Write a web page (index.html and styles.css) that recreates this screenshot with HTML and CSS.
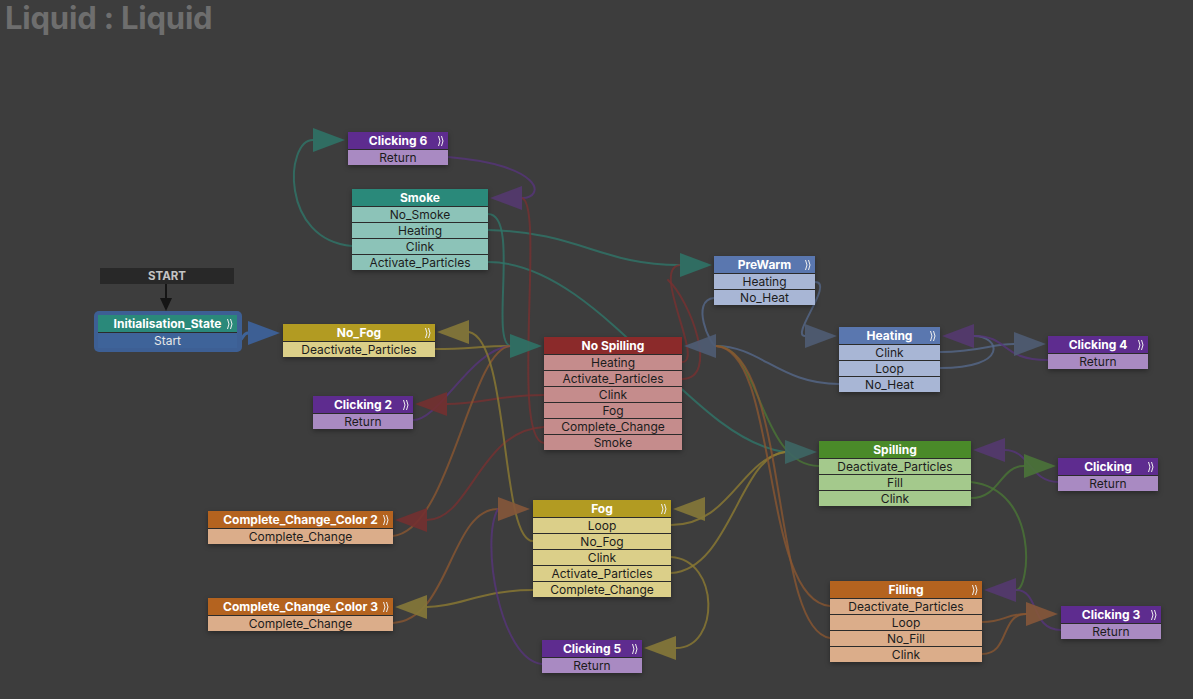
FILE: index.html
```html
<!DOCTYPE html>
<html>
<head>
<meta charset="utf-8">
<link rel="stylesheet" href="styles.css">
</head>
<body>
<div class="canvas">
  <div class="title">Liquid : Liquid</div>

  <svg class="edges" width="1193" height="699" viewBox="0 0 1193 699">
    <g fill="none" stroke-width="2" stroke-linecap="round">
      <path class="e-teal" d="M352,246 C280,240 285,140 313,140"/>
      <path class="e-purple" d="M448,157 C545,165 545,198 522,198"/>
      <path class="e-teal" d="M488,230 C580,232 600,265 680,265"/>
      <path class="e-teal" d="M488,214 C520,214 490,340 510,346"/>
      <path class="e-teal" d="M488,262 C600,262 690,440 785,452"/>
      <path class="e-yellow" d="M435,349 C470,349 480,346 510,346"/>
      <path class="e-purple" d="M413,420 C440,420 470,350 510,346"/>
      <path class="e-red" d="M544,443 C510,440 545,205 522,198"/>
      <path class="e-red" d="M544,395 C500,395 480,404 447,404"/>
      <path class="e-red" d="M544,427 C480,430 470,520 427,520"/>
      <path class="e-red" d="M682,362 C705,362 650,268 680,265"/>
      <path class="e-red" d="M682,379 C720,379 690,300 668,280"/>
      <path class="e-orange" d="M393,536 C450,530 470,350 510,346"/>
      <path class="e-orange" d="M393,623 C450,620 450,509 498,509"/>
      <path class="e-yellow" d="M533,590 C480,590 460,607 427,607"/>
      <path class="e-yellow" d="M533,541 C500,541 510,340 469,332"/>
      <path class="e-yellow" d="M671,525 C730,525 740,460 785,452"/>
      <path class="e-yellow" d="M671,557 C720,560 720,648 676,648"/>
      <path class="e-yellow" d="M671,573 C730,570 740,455 785,452"/>
      <path class="e-purple" d="M542,664 C500,660 480,540 498,509"/>
      <path class="e-slate" d="M714,298 C690,300 710,346 716,346"/>
      <path class="e-slate" d="M839,384 C780,384 760,346 716,346"/>
      <path class="e-slate" d="M815,282 C835,282 790,336 805,336"/>
      <path class="e-slate" d="M940,352 C980,352 990,344 1014,344"/>
      <path class="e-slate" d="M940,368 C1010,368 1000,336 974,336"/>
      <path class="e-purple" d="M1048,360 C1000,360 1010,336 974,336"/>
      <path class="e-green" d="M819,466 C760,466 760,346 716,346"/>
      <path class="e-green" d="M971,482 C1040,490 1030,590 1016,590"/>
      <path class="e-green" d="M971,498 C1000,498 1000,466 1024,466"/>
      <path class="e-purple" d="M1058,482 C1030,482 1030,450 1005,450"/>
      <path class="e-orange" d="M982,622 C1005,622 1005,614 1026,614"/>
      <path class="e-orange" d="M982,654 C1010,654 1000,614 1026,614"/>
      <path class="e-purple" d="M1061,630 C1030,630 1040,590 1016,590"/>
      <path class="e-orange" d="M830,606 C760,600 780,350 716,346"/>
      <path class="e-orange" d="M830,638 C770,630 790,350 716,346"/>
      <path class="e-blue" d="M237,341 C244,341 242,333 248,333"/>
      <path class="e-black" d="M166,284 L166,300"/>
    </g>
    <g class="arrows">
      <polygon class="a-black" points="160,298 172,298 166,311"/>
      <polygon class="a-teal" points="313,128 345,140 313,152"/>
      <polygon class="a-purple" points="522,186 490,198 522,210"/>
      <polygon class="a-teal" points="680,253 712,265 680,277"/>
      <polygon class="a-blue" points="248,321 280,333 248,345"/>
      <polygon class="a-yellow" points="469,320 437,332 469,344"/>
      <polygon class="a-teal" points="510,334 542,346 510,358"/>
      <polygon class="a-slate" points="716,334 684,346 716,358"/>
      <polygon class="a-slate" points="805,324 837,336 805,348"/>
      <polygon class="a-purple" points="974,324 942,336 974,348"/>
      <polygon class="a-slate" points="1014,332 1046,344 1014,356"/>
      <polygon class="a-red" points="447,392 415,404 447,416"/>
      <polygon class="a-tealgray" points="785,440 817,452 785,464"/>
      <polygon class="a-purple" points="1005,438 973,450 1005,462"/>
      <polygon class="a-green" points="1024,454 1056,466 1024,478"/>
      <polygon class="a-red" points="427,508 395,520 427,532"/>
      <polygon class="a-orange" points="498,497 530,509 498,521"/>
      <polygon class="a-yellow" points="705,497 673,509 705,521"/>
      <polygon class="a-yellow" points="427,595 395,607 427,619"/>
      <polygon class="a-yellow" points="676,636 644,648 676,660"/>
      <polygon class="a-purple" points="1016,578 984,590 1016,602"/>
      <polygon class="a-orange" points="1026,602 1058,614 1026,626"/>
    </g>
  </svg>

  <div class="start-tag">START</div>

  <div class="selected n-init">
    <div class="node">
      <div class="hdr h-teal">Initialisation_State<svg class="seq" viewBox="0 0 8 12"><path d="M1.5,1 Q4.5,6 1.5,11 M4.5,1 Q7.5,6 4.5,11"/></svg></div>
      <div class="row r-blue">Start</div>
    </div>
  </div>

  <div class="node n-click6">
    <div class="hdr h-purple">Clicking 6<svg class="seq" viewBox="0 0 8 12"><path d="M1.5,1 Q4.5,6 1.5,11 M4.5,1 Q7.5,6 4.5,11"/></svg></div>
    <div class="row r-purple">Return</div>
  </div>

  <div class="node n-smoke">
    <div class="hdr h-teal">Smoke</div>
    <div class="row r-teal">No_Smoke</div>
    <div class="row r-teal">Heating</div>
    <div class="row r-teal">Clink</div>
    <div class="row r-teal">Activate_Particles</div>
  </div>

  <div class="node n-prewarm">
    <div class="hdr h-slate">PreWarm<svg class="seq" viewBox="0 0 8 12"><path d="M1.5,1 Q4.5,6 1.5,11 M4.5,1 Q7.5,6 4.5,11"/></svg></div>
    <div class="row r-slate">Heating</div>
    <div class="row r-slate">No_Heat</div>
  </div>

  <div class="node n-heating">
    <div class="hdr h-slate">Heating<svg class="seq" viewBox="0 0 8 12"><path d="M1.5,1 Q4.5,6 1.5,11 M4.5,1 Q7.5,6 4.5,11"/></svg></div>
    <div class="row r-slate">Clink</div>
    <div class="row r-slate">Loop</div>
    <div class="row r-slate">No_Heat</div>
  </div>

  <div class="node n-click4">
    <div class="hdr h-purple">Clicking 4<svg class="seq" viewBox="0 0 8 12"><path d="M1.5,1 Q4.5,6 1.5,11 M4.5,1 Q7.5,6 4.5,11"/></svg></div>
    <div class="row r-purple">Return</div>
  </div>

  <div class="node n-nofog">
    <div class="hdr h-yellow">No_Fog<svg class="seq" viewBox="0 0 8 12"><path d="M1.5,1 Q4.5,6 1.5,11 M4.5,1 Q7.5,6 4.5,11"/></svg></div>
    <div class="row r-yellow">Deactivate_Particles</div>
  </div>

  <div class="node n-nospill">
    <div class="hdr h-red">No Spilling</div>
    <div class="row r-red">Heating</div>
    <div class="row r-red">Activate_Particles</div>
    <div class="row r-red">Clink</div>
    <div class="row r-red">Fog</div>
    <div class="row r-red">Complete_Change</div>
    <div class="row r-red">Smoke</div>
  </div>

  <div class="node n-click2">
    <div class="hdr h-purple">Clicking 2<svg class="seq" viewBox="0 0 8 12"><path d="M1.5,1 Q4.5,6 1.5,11 M4.5,1 Q7.5,6 4.5,11"/></svg></div>
    <div class="row r-purple">Return</div>
  </div>

  <div class="node n-spill">
    <div class="hdr h-green">Spilling</div>
    <div class="row r-green">Deactivate_Particles</div>
    <div class="row r-green">Fill</div>
    <div class="row r-green">Clink</div>
  </div>

  <div class="node n-click">
    <div class="hdr h-purple">Clicking<svg class="seq" viewBox="0 0 8 12"><path d="M1.5,1 Q4.5,6 1.5,11 M4.5,1 Q7.5,6 4.5,11"/></svg></div>
    <div class="row r-purple">Return</div>
  </div>

  <div class="node n-ccc2">
    <div class="hdr h-orange">Complete_Change_Color 2<svg class="seq" viewBox="0 0 8 12"><path d="M1.5,1 Q4.5,6 1.5,11 M4.5,1 Q7.5,6 4.5,11"/></svg></div>
    <div class="row r-orange">Complete_Change</div>
  </div>

  <div class="node n-ccc3">
    <div class="hdr h-orange">Complete_Change_Color 3<svg class="seq" viewBox="0 0 8 12"><path d="M1.5,1 Q4.5,6 1.5,11 M4.5,1 Q7.5,6 4.5,11"/></svg></div>
    <div class="row r-orange">Complete_Change</div>
  </div>

  <div class="node n-fog">
    <div class="hdr h-yellow">Fog<svg class="seq" viewBox="0 0 8 12"><path d="M1.5,1 Q4.5,6 1.5,11 M4.5,1 Q7.5,6 4.5,11"/></svg></div>
    <div class="row r-yellow">Loop</div>
    <div class="row r-yellow">No_Fog</div>
    <div class="row r-yellow">Clink</div>
    <div class="row r-yellow">Activate_Particles</div>
    <div class="row r-yellow">Complete_Change</div>
  </div>

  <div class="node n-click5">
    <div class="hdr h-purple">Clicking 5<svg class="seq" viewBox="0 0 8 12"><path d="M1.5,1 Q4.5,6 1.5,11 M4.5,1 Q7.5,6 4.5,11"/></svg></div>
    <div class="row r-purple">Return</div>
  </div>

  <div class="node n-filling">
    <div class="hdr h-orange">Filling<svg class="seq" viewBox="0 0 8 12"><path d="M1.5,1 Q4.5,6 1.5,11 M4.5,1 Q7.5,6 4.5,11"/></svg></div>
    <div class="row r-orange">Deactivate_Particles</div>
    <div class="row r-orange">Loop</div>
    <div class="row r-orange">No_Fill</div>
    <div class="row r-orange">Clink</div>
  </div>

  <div class="node n-click3">
    <div class="hdr h-purple">Clicking 3<svg class="seq" viewBox="0 0 8 12"><path d="M1.5,1 Q4.5,6 1.5,11 M4.5,1 Q7.5,6 4.5,11"/></svg></div>
    <div class="row r-purple">Return</div>
  </div>
</div>
</body>
</html>
```
FILE: styles.css
```css
html, body {
  margin: 0;
  padding: 0;
  background: #3d3d3d;
  width: 1193px;
  height: 699px;
  overflow: hidden;
  font-family: Inter, "Noto Sans", "Liberation Sans", sans-serif;
}

.canvas {
  position: relative;
  width: 1193px;
  height: 699px;
}

.title {
  padding: 0 0 0 5px;
  font-size: 31px;
  font-weight: 700;
  line-height: 36px;
  color: #6e6e6e;
  letter-spacing: -0.2px;
}

.edges {
  position: absolute;
  left: 0;
  top: 0;
}

.e-teal { stroke: #2f7569; opacity: 0.8; }
.e-purple { stroke: #56347a; opacity: 0.8; }
.e-yellow { stroke: #8c7b32; opacity: 0.8; }
.e-red { stroke: #773131; opacity: 0.8; }
.e-orange { stroke: #8a5631; opacity: 0.8; }
.e-slate { stroke: #55688a; opacity: 0.8; }
.e-green { stroke: #4a7536; opacity: 0.8; }
.e-blue { stroke: #3e6399; stroke-width: 3; }
.e-black { stroke: #151515; stroke-width: 2; }

.a-black { fill: #151515; }
.a-teal { fill: #2f7266; opacity: 0.9; }
.a-tealgray { fill: #3d6664; opacity: 0.9; }
.a-purple { fill: #54396f; opacity: 0.9; }
.a-yellow { fill: #857838; opacity: 0.9; }
.a-red { fill: #733030; opacity: 0.9; }
.a-orange { fill: #85573a; opacity: 0.9; }
.a-slate { fill: #4f5c73; opacity: 0.9; }
.a-green { fill: #4a7338; opacity: 0.9; }
.a-blue { fill: #3d5f94; }

.start-tag {
  position: absolute;
  left: 100px;
  top: 268px;
  width: 134px;
  height: 16px;
  background: #282828;
  color: #c4c4c4;
  font-size: 11.5px;
  font-weight: 700;
  line-height: 16px;
  text-align: center;
}

.node {
  position: absolute;
  display: flex;
  flex-direction: column;
  background: #2b2b2b;
  box-shadow: 0 2px 5px rgba(0, 0, 0, 0.35);
}

.selected {
  position: absolute;
  left: 94px;
  top: 311px;
  padding: 4px 5px 4px 4px;
  background: #3d5f94;
  border-radius: 5px;
}
.selected .node {
  position: relative;
  width: 139px;
  box-shadow: none;
}

.hdr {
  position: relative;
  height: 17px;
  line-height: 17px;
  font-size: 12px;
  font-weight: 700;
  color: #ffffff;
  text-align: center;
  white-space: nowrap;
}

.row {
  height: 15px;
  line-height: 15px;
  margin-top: 1px;
  font-size: 12px;
  color: #1c1c1c;
  text-align: center;
  white-space: nowrap;
}

.seq {
  position: absolute;
  right: 3px;
  top: 3px;
  width: 8px;
  height: 12px;
  fill: none;
  stroke: #f0f0f0;
  stroke-width: 1;
}

.h-purple { background: #5e2c8f; }
.r-purple { background: #a98ac2; }
.h-teal { background: #2a897a; }
.r-teal { background: #8cc3b8; }
.h-slate { background: #5a77af; }
.r-slate { background: #a8b6d5; }
.h-yellow { background: #b29b22; }
.r-yellow { background: #dbcf89; }
.h-red { background: #8b2a2a; }
.r-red { background: #c58c8c; }
.h-green { background: #4a8a29; }
.r-green { background: #a4c98c; }
.h-orange { background: #b4631f; }
.r-orange { background: #dbad8a; }
.r-blue { background: #3e6399; color: #e8e8e8; }

.n-click6 { left: 348px; top: 132px; width: 100px; }
.n-smoke { left: 352px; top: 189px; width: 136px; }
.n-prewarm { left: 714px; top: 256px; width: 101px; }
.n-heating { left: 839px; top: 327px; width: 101px; }
.n-click4 { left: 1048px; top: 336px; width: 100px; }
.n-nofog { left: 283px; top: 324px; width: 152px; }
.n-nospill { left: 544px; top: 337px; width: 138px; }
.n-click2 { left: 313px; top: 396px; width: 100px; }
.n-spill { left: 819px; top: 441px; width: 152px; }
.n-click { left: 1058px; top: 458px; width: 100px; }
.n-ccc2 { left: 208px; top: 511px; width: 185px; }
.n-ccc3 { left: 208px; top: 598px; width: 185px; }
.n-fog { left: 533px; top: 500px; width: 138px; }
.n-click5 { left: 542px; top: 640px; width: 100px; }
.n-filling { left: 830px; top: 581px; width: 152px; }
.n-click3 { left: 1061px; top: 606px; width: 100px; }
```
